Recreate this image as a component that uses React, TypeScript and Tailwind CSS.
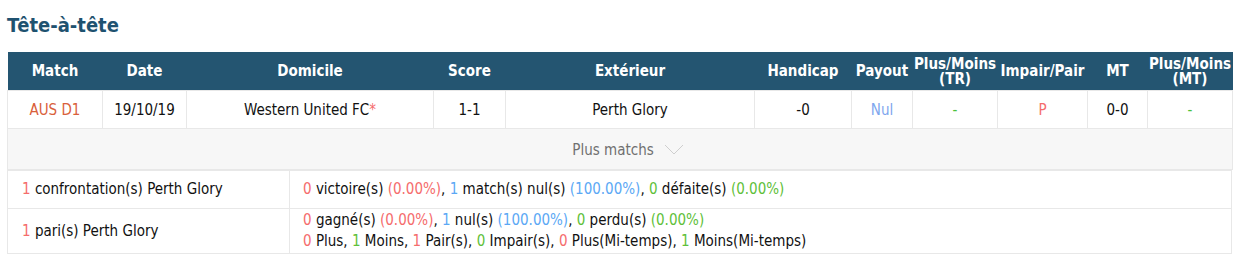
const cols = [
  { label: "Match", w: "w-[95px]" },
  { label: "Date", w: "w-[84px]" },
  { label: "Domicile", w: "w-[247px]" },
  { label: "Score", w: "w-[72px]" },
  { label: "Extérieur", w: "w-[249px]" },
  { label: "Handicap", w: "w-[97px]" },
  { label: "Payout", w: "w-[61px]" },
  { label: "Plus/Moins (TR)", w: "w-[85px]" },
  { label: "Impair/Pair", w: "w-[90px]" },
  { label: "MT", w: "w-[60px]" },
  { label: "Plus/Moins (MT)", w: "w-[85px]" },
];

const R = ({ children }: { children: React.ReactNode }) => (
  <span className="text-[#f56c6c]">{children}</span>
);
const G = ({ children }: { children: React.ReactNode }) => (
  <span className="text-[#5fbf3a]">{children}</span>
);
const B = ({ children }: { children: React.ReactNode }) => (
  <span className="text-[#5ba8f5]">{children}</span>
);

export default function App() {
  return (
    <div
      className="bg-white w-[1242px] h-[262px] px-[7px] text-[15px] text-[#111]"
      style={{ fontFamily: '"DejaVu Sans Condensed", "DejaVu Sans", sans-serif' }}
    >
      <h2 className="h-[52px] pt-[11px] text-[20px] font-bold text-[#1f5270] leading-[28px]">
        Tête-à-tête
      </h2>
      <table className="w-[1225px] table-fixed border-collapse">
        <thead>
          <tr className="h-[38px] bg-[#245571] text-white">
            {cols.map((c) => (
              <th
                key={c.label}
                className={`${c.w} p-0 pt-[2px] font-bold text-[15px] leading-[15px] whitespace-pre-line`}
              >
                {c.label.replace(" ", "\n")}
              </th>
            ))}
          </tr>
        </thead>
        <tbody>
          <tr className="h-[38px] text-center [&>td]:border [&>td]:border-[#e8e8e8] [&>td]:pt-[2px]">
            <td className="text-[#d9603b]">AUS D1</td>
            <td>19/10/19</td>
            <td>
              Western United FC<span className="text-[#f56c6c]">*</span>
            </td>
            <td>1-1</td>
            <td>Perth Glory</td>
            <td>-0</td>
            <td className="text-[#7ea6ee]">Nul</td>
            <td className="text-[#4cc23a]">-</td>
            <td className="text-[#f56c6c]">P</td>
            <td>0-0</td>
            <td className="text-[#4cc23a]">-</td>
          </tr>
          <tr className="h-[41px] bg-[#f7f7f7]">
            <td colSpan={11} className="border border-[#e8e8e8] text-center text-[#707070]">
              <span className="inline-flex items-center gap-[10px] pt-[3px] pl-[16px]">
                Plus matchs
                <svg width="20" height="11" viewBox="0 0 20 11" className="mt-[-2px]">
                  <path d="M1 1 L10 10 L19 1" fill="none" stroke="#cfcfcf" strokeWidth="1" />
                </svg>
              </span>
            </td>
          </tr>
        </tbody>
      </table>
      <table className="w-[1225px] table-fixed border-collapse">
        <tbody className="[&_td]:border [&_td]:border-[#e8e8e8]">
          <tr className="h-[38px]">
            <td className="w-[282px] pl-[14px]">
              <R>1</R> confrontation(s) Perth Glory
            </td>
            <td className="pl-[13px]">
              <R>0</R> victoire(s) <R>(0.00%)</R>, <B>1</B> match(s) nul(s){" "}
              <B>(100.00%)</B>, <G>0</G> défaite(s) <G>(0.00%)</G>
            </td>
          </tr>
          <tr className="h-[45px]">
            <td className="pl-[14px] pt-[2px]">
              <R>1</R> pari(s) Perth Glory
            </td>
            <td className="pl-[13px] leading-[21px]">
              <div>
                <R>0</R> gagné(s) <R>(0.00%)</R>, <B>1</B> nul(s) <B>(100.00%)</B>,{" "}
                <G>0</G> perdu(s) <G>(0.00%)</G>
              </div>
              <div>
                <R>0</R> Plus, <G>1</G> Moins, <R>1</R> Pair(s), <G>0</G> Impair(s),{" "}
                <R>0</R> Plus(Mi-temps), <G>1</G> Moins(Mi-temps)
              </div>
            </td>
          </tr>
        </tbody>
      </table>
    </div>
  );
}
